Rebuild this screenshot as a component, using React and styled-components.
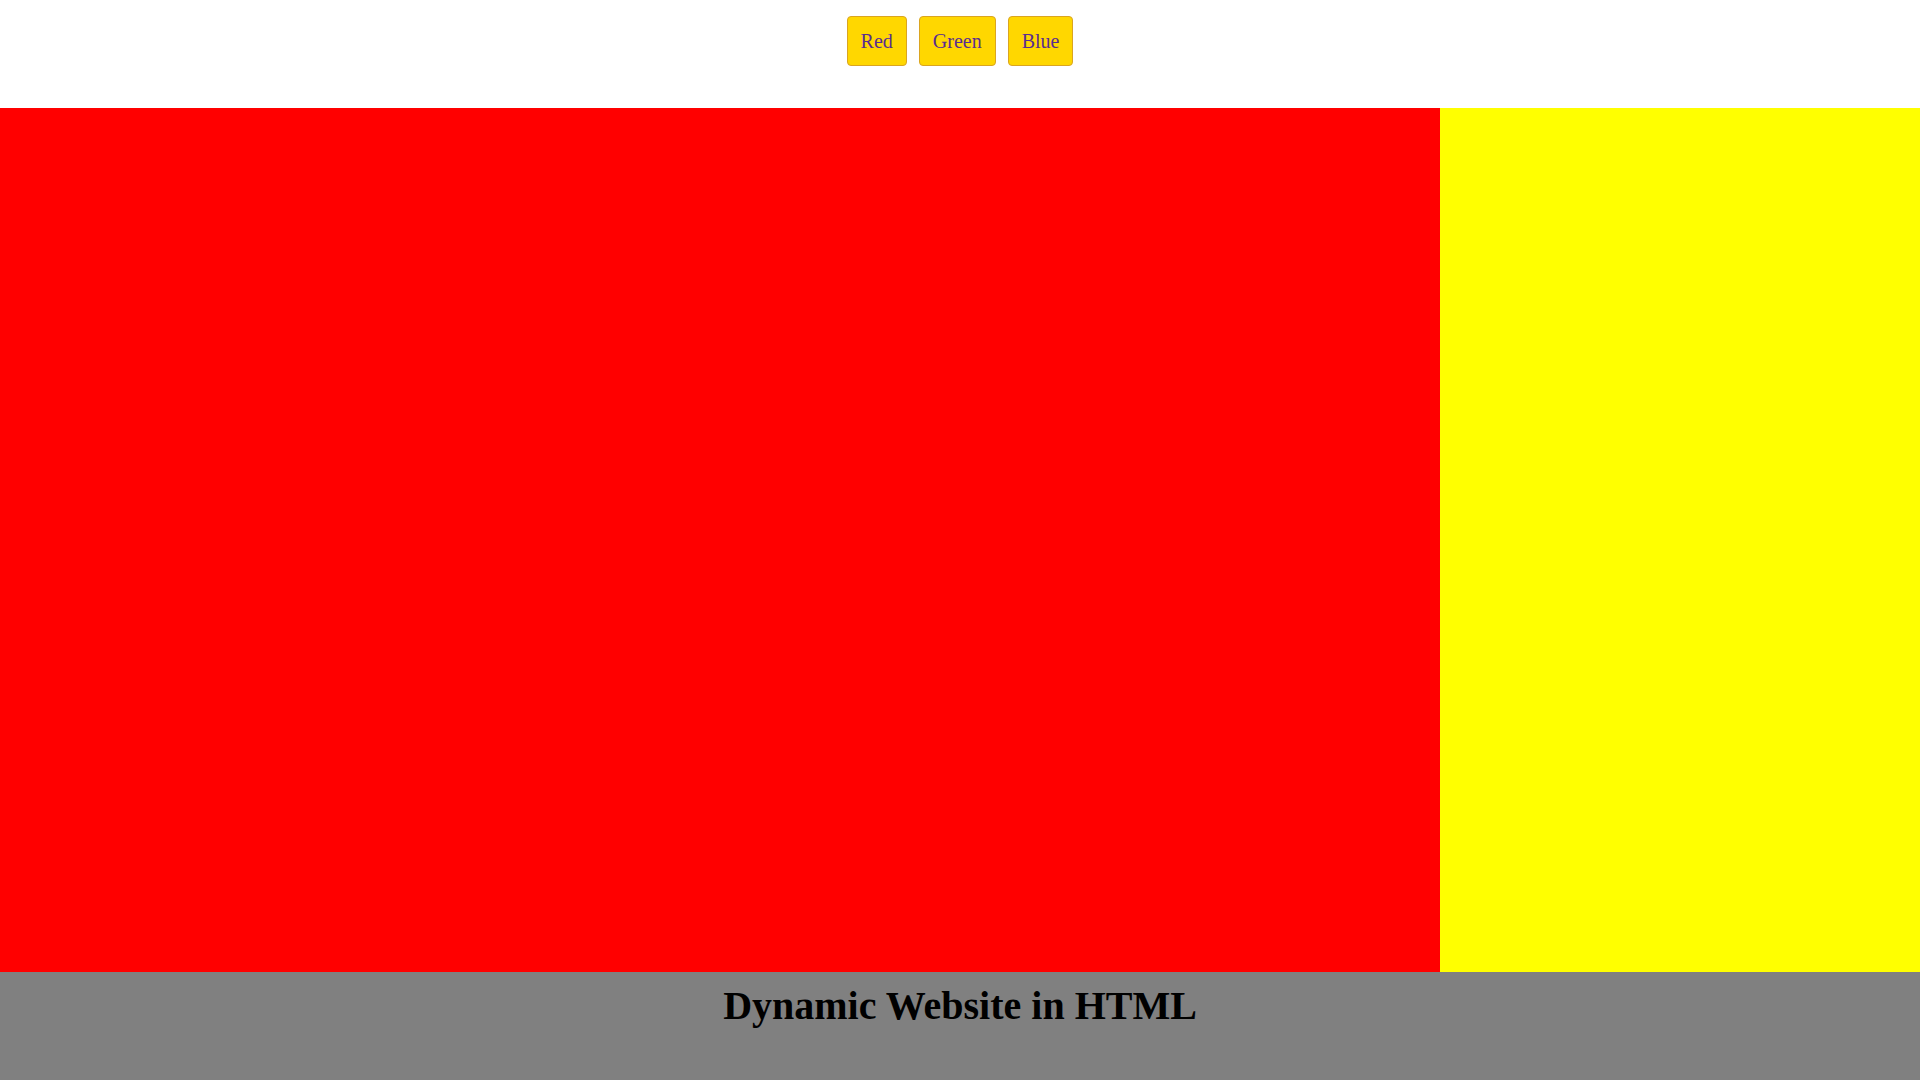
import { useState } from 'react';
import styled, { createGlobalStyle } from 'styled-components';

const GlobalStyle = createGlobalStyle`
  html, body {
    margin: 0;
    padding: 0;
    height: 100%;
  }
  body {
    font-family: "Liberation Serif", "Times New Roman", serif;
  }
  #root {
    height: 100%;
  }
`;

const colors = ['Red', 'Green', 'Blue'];

const App = () => {
  const [color, setColor] = useState('red');

  return (
    <Page>
      <GlobalStyle />
      <Header>
        {colors.map((c) => (
          <Btn key={c} onClick={() => setColor(c.toLowerCase())}>
            {c}
          </Btn>
        ))}
      </Header>
      <Main>
        <Content bg={color} />
        <Side />
      </Main>
      <Footer>
        <h1>Dynamic Website in HTML</h1>
      </Footer>
    </Page>
  );
};

export default App;

const Page = styled.div`
  display: flex;
  flex-direction: column;
  height: 100vh;
`;

const Header = styled.div`
  height: 108px;
  display: flex;
  justify-content: center;
  align-items: flex-start;
  gap: 12px;
  padding-top: 16px;
  box-sizing: border-box;
`;

const Btn = styled.button`
  font-family: "Liberation Serif", "Times New Roman", serif;
  font-size: 20px;
  line-height: 24px;
  color: #5a2d91;
  background-color: #ffd700;
  border: 1px solid #daa520;
  border-radius: 4px;
  padding: 12px 13px;
  height: 50px;
  cursor: pointer;
`;

const Main = styled.div`
  display: flex;
  height: 864px;
`;

const Content = styled.div`
  width: 1440px;
  background-color: ${(props) => props.bg};
`;

const Side = styled.div`
  flex: 1;
  background-color: yellow;
`;

const Footer = styled.div`
  flex: 1;
  background-color: grey;
  text-align: center;

  h1 {
    margin: 11px 0 0;
    font-size: 40px;
    line-height: 46px;
    font-weight: bold;
    color: black;
  }
`;
